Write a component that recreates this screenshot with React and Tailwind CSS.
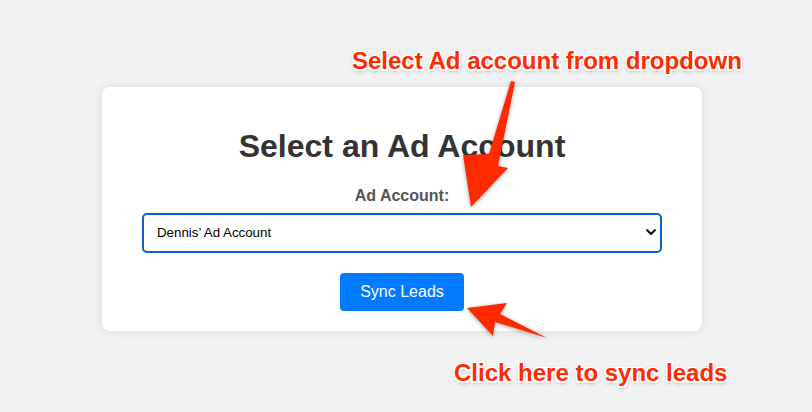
import React, { useState } from 'react';

const accounts = ['Dennis’ Ad Account', 'Marketing Ad Account', 'Test Ad Account'];

function Annotation({ className, children }) {
  return (
    <div
      className={`absolute whitespace-nowrap text-[24px] leading-[28px] font-bold text-[#ff2a00] [text-shadow:-1.5px_-1.5px_0_#fff,1.5px_-1.5px_0_#fff,-1.5px_1.5px_0_#fff,1.5px_1.5px_0_#fff,0_-1.5px_0_#fff,0_1.5px_0_#fff,-1.5px_0_0_#fff,1.5px_0_0_#fff,0_2px_4px_rgba(0,0,0,0.35)] ${className}`}
    >
      {children}
    </div>
  );
}

export default function App() {
  const [account, setAccount] = useState(accounts[0]);

  return (
    <div className="relative min-h-screen w-full overflow-hidden bg-[#f2f2f2] font-['Liberation_Sans',Arial,sans-serif]">
      <div className="pt-[87px] pl-[102px]">
        <div className="w-[600px] rounded-lg bg-white px-5 pt-5 pb-5 shadow-[0_0_10px_rgba(0,0,0,0.1)]">
          <h1 className="mt-[21px] mb-[23px] text-center text-[32px] leading-[36px] font-bold text-[#333]">
            Select an Ad Account
          </h1>
          <label htmlFor="account" className="mb-2 block text-center text-[16px] leading-[18px] font-bold text-[#555]">
            Ad Account:
          </label>
          <div className="relative mx-5">
            <select
              id="account"
              value={account}
              onChange={(e) => setAccount(e.target.value)}
              className="block h-10 w-full appearance-none rounded-[5px] border-2 border-[#0b62c6] bg-white pl-[13px] pr-6 text-[13.3px] text-black outline-none"
            >
              {accounts.map((a) => (
                <option key={a}>{a}</option>
              ))}
            </select>
            <svg
              className="pointer-events-none absolute right-[6px] top-[16px]"
              width="10"
              height="7"
              viewBox="0 0 10 7"
            >
              <polyline points="1.2,1.2 5,5 8.8,1.2" fill="none" stroke="#111" strokeWidth="2.2" strokeLinecap="round" strokeLinejoin="round" />
            </svg>
          </div>
          <div className="mt-5 flex justify-center">
            <button className="h-[38px] rounded-[4px] bg-[#007bff] px-5 text-[16px] text-white">
              Sync Leads
            </button>
          </div>
        </div>
      </div>

      <svg className="pointer-events-none absolute left-0 top-0 [filter:drop-shadow(0_1px_2px_rgba(0,0,0,0.35))]" width="812" height="412">
        <polygon
          points="511,81 515,82 498,166 508,168 471,207 463,155 489,154"
          fill="#ff2a00"
        />
        <polygon
          points="467,308 507,303 500,314 547,338 495,322 493,336"
          fill="#ff2a00"
        />
      </svg>

      <Annotation className="left-[352px] top-[47px]">Select Ad account from dropdown</Annotation>
      <Annotation className="left-[454px] top-[359px]">Click here to sync leads</Annotation>
    </div>
  );
}
